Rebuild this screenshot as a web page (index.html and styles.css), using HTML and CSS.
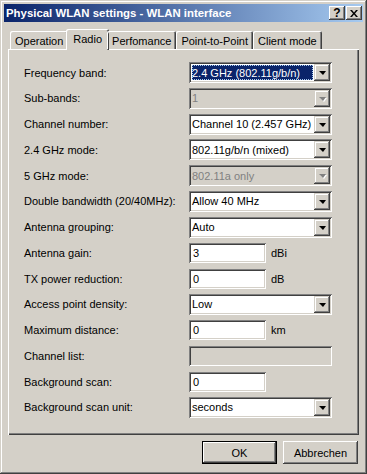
FILE: index.html
```html
<!DOCTYPE html>
<html>
<head>
<meta charset="utf-8">
<link rel="stylesheet" href="styles.css">
</head>
<body>
<div class="window">
  <div class="titlebar">
    <span class="title">Physical WLAN settings - WLAN interface</span>
    <div class="caption-btns">
      <div class="cbtn">?</div>
      <div class="cbtn close">
        <svg width="8" height="7" viewBox="0 0 8 7"><path d="M0 0h2l2 2.5 2-2.5h2l-3 3.5 3 3.5h-2l-2-2.5-2 2.5h-2l3-3.5z" fill="#000"/></svg>
      </div>
    </div>
  </div>
  <div class="tabs">
    <div class="tab">Operation</div>
    <div class="tab active">Radio</div>
    <div class="tab">Perfomance</div>
    <div class="tab">Point-to-Point</div>
    <div class="tab">Client mode</div>
  </div>
  <div class="panel">
    <div class="form">
      <div class="label">Frequency band:</div>
      <div class="combo focus"><span class="value"><span class="sel">2.4 GHz (802.11g/b/n)</span></span><span class="arrow"></span></div>

      <div class="label">Sub-bands:</div>
      <div class="combo disabled"><span class="value">1</span><span class="arrow"></span></div>

      <div class="label">Channel number:</div>
      <div class="combo"><span class="value">Channel 10 (2.457 GHz)</span><span class="arrow"></span></div>

      <div class="label">2.4 GHz mode:</div>
      <div class="combo"><span class="value">802.11g/b/n (mixed)</span><span class="arrow"></span></div>

      <div class="label">5 GHz mode:</div>
      <div class="combo disabled"><span class="value">802.11a only</span><span class="arrow"></span></div>

      <div class="label">Double bandwidth (20/40MHz):</div>
      <div class="combo"><span class="value">Allow 40 MHz</span><span class="arrow"></span></div>

      <div class="label">Antenna grouping:</div>
      <div class="combo"><span class="value">Auto</span><span class="arrow"></span></div>

      <div class="label">Antenna gain:</div>
      <div class="field"><div class="edit">3</div><span class="unit">dBi</span></div>

      <div class="label">TX power reduction:</div>
      <div class="field"><div class="edit">0</div><span class="unit">dB</span></div>

      <div class="label">Access point density:</div>
      <div class="combo"><span class="value">Low</span><span class="arrow"></span></div>

      <div class="label">Maximum distance:</div>
      <div class="field"><div class="edit">0</div><span class="unit">km</span></div>

      <div class="label">Channel list:</div>
      <div class="field"><div class="edit wide disabled"></div></div>

      <div class="label">Background scan:</div>
      <div class="field"><div class="edit">0</div></div>

      <div class="label">Background scan unit:</div>
      <div class="combo"><span class="value">seconds</span><span class="arrow"></span></div>
    </div>
  </div>
  <div class="buttons">
    <div class="btn default"><span>OK</span></div>
    <div class="btn"><span>Abbrechen</span></div>
  </div>
</div>
</body>
</html>
```

FILE: styles.css
```css
* { box-sizing: border-box; }
html, body { margin: 0; padding: 0; background: #d4d0c8; }
body {
  font-family: "Liberation Sans", Arial, sans-serif;
  font-size: 11px;
  color: #000;
}
.window {
  width: 367px;
  height: 474px;
  padding: 4px;
  background: #d4d0c8;
  display: flex;
  flex-direction: column;
  box-shadow: inset -1px -1px #404040, inset 1px 1px #d4d0c8, inset -2px -2px #808080, inset 2px 2px #ffffff;
}
.titlebar {
  height: 18px;
  flex: none;
  display: flex;
  align-items: center;
  padding-left: 2px;
  background: linear-gradient(to right, #0a246a, #a6caf0);
}
.title {
  flex: 1;
  color: #fff;
  font-weight: bold;
  font-size: 11.4px;
  white-space: nowrap;
}
.caption-btns { display: flex; margin-right: 1px; }
.cbtn {
  width: 16px;
  height: 14px;
  display: flex;
  align-items: center;
  justify-content: center;
  background: #d4d0c8;
  font-weight: bold;
  font-size: 12px;
  line-height: 1;
  box-shadow: inset -1px -1px #404040, inset 1px 1px #ffffff, inset -2px -2px #808080;
}
.cbtn.close { margin-left: 1px; }
.tabs {
  flex: none;
  height: 27px;
  display: flex;
  align-items: flex-end;
  padding-left: 6px;
  position: relative;
  z-index: 1;
}
.tab {
  height: 18px;
  padding: 1px 5px 0 5px;
  display: flex;
  align-items: center;
  border-radius: 2px 2px 0 0;
  box-shadow: inset 1px 1px #ffffff, inset -1px 0 #404040, inset -2px 0 #808080;
  white-space: nowrap;
}
.tab.active {
  height: 21px;
  margin: 0 -2px -1px -2px;
  padding: 0 7px 2px 7px;
  background: #d4d0c8;
}
.panel {
  flex: 1;
  margin: 0 4px;
  padding: 13px 0 0 16px;
  box-shadow: inset 1px 1px #ffffff, inset -1px -1px #404040, inset -2px -2px #808080;
}
.form {
  display: grid;
  grid-template-columns: 165px 143px;
  grid-auto-rows: 21px;
  row-gap: 4.77px;
  align-items: center;
}
.label { white-space: nowrap; }
.combo {
  height: 21px;
  padding: 2px;
  display: flex;
  background: #fff;
  box-shadow: inset 1px 1px #808080, inset -1px -1px #ffffff, inset 2px 2px #404040, inset -2px -2px #d4d0c8;
}
.combo .value {
  flex: 1;
  display: flex;
  align-items: center;
  padding-left: 1px;
  white-space: nowrap;
  overflow: hidden;
}
.combo .sel {
  flex: 1;
  align-self: stretch;
  display: flex;
  align-items: center;
  margin: 1px 1px 1px 0;
  background: #0a246a;
  color: #fff;
  outline: 1px dotted #a6caf0;
  outline-offset: -1px;
}
.combo .arrow {
  width: 16px;
  height: 17px;
  flex: none;
  display: flex;
  align-items: center;
  justify-content: center;
  background: #d4d0c8;
  box-shadow: inset -1px -1px #404040, inset 1px 1px #d4d0c8, inset -2px -2px #808080, inset 2px 2px #ffffff;
}
.combo .arrow::after {
  content: "";
  width: 0;
  height: 0;
  border-left: 4px solid transparent;
  border-right: 3px solid transparent;
  border-top: 4px solid #000;
  margin-top: 1px;
}
.combo.disabled { background: #d4d0c8; }
.combo.disabled .value { color: #808080; }
.combo.disabled .arrow::after { border-top-color: #808080; filter: drop-shadow(1px 1px 0 #fff); }
.field {
  display: flex;
  align-items: center;
  height: 21px;
}
.edit {
  width: 77px;
  height: 20px;
  padding-left: 4px;
  display: flex;
  align-items: center;
  background: #fff;
  box-shadow: inset 1px 1px #808080, inset -1px -1px #ffffff, inset 2px 2px #404040, inset -2px -2px #d4d0c8;
}
.edit.wide { width: 143px; }
.edit.disabled { background: #d4d0c8; }
.unit { margin-left: 5px; }
.buttons {
  flex: none;
  display: flex;
  justify-content: flex-end;
  gap: 6px;
  margin: 6px 5px 6px 0;
}
.btn {
  width: 75px;
  height: 23px;
  display: flex;
  align-items: center;
  justify-content: center;
  background: #d4d0c8;
  box-shadow: inset -1px -1px #404040, inset 1px 1px #ffffff, inset -2px -2px #808080;
}
.btn.default {
  box-shadow: inset 0 0 0 1px #000, inset -2px -2px #404040, inset 2px 2px #ffffff, inset -3px -3px #808080;
}
```
